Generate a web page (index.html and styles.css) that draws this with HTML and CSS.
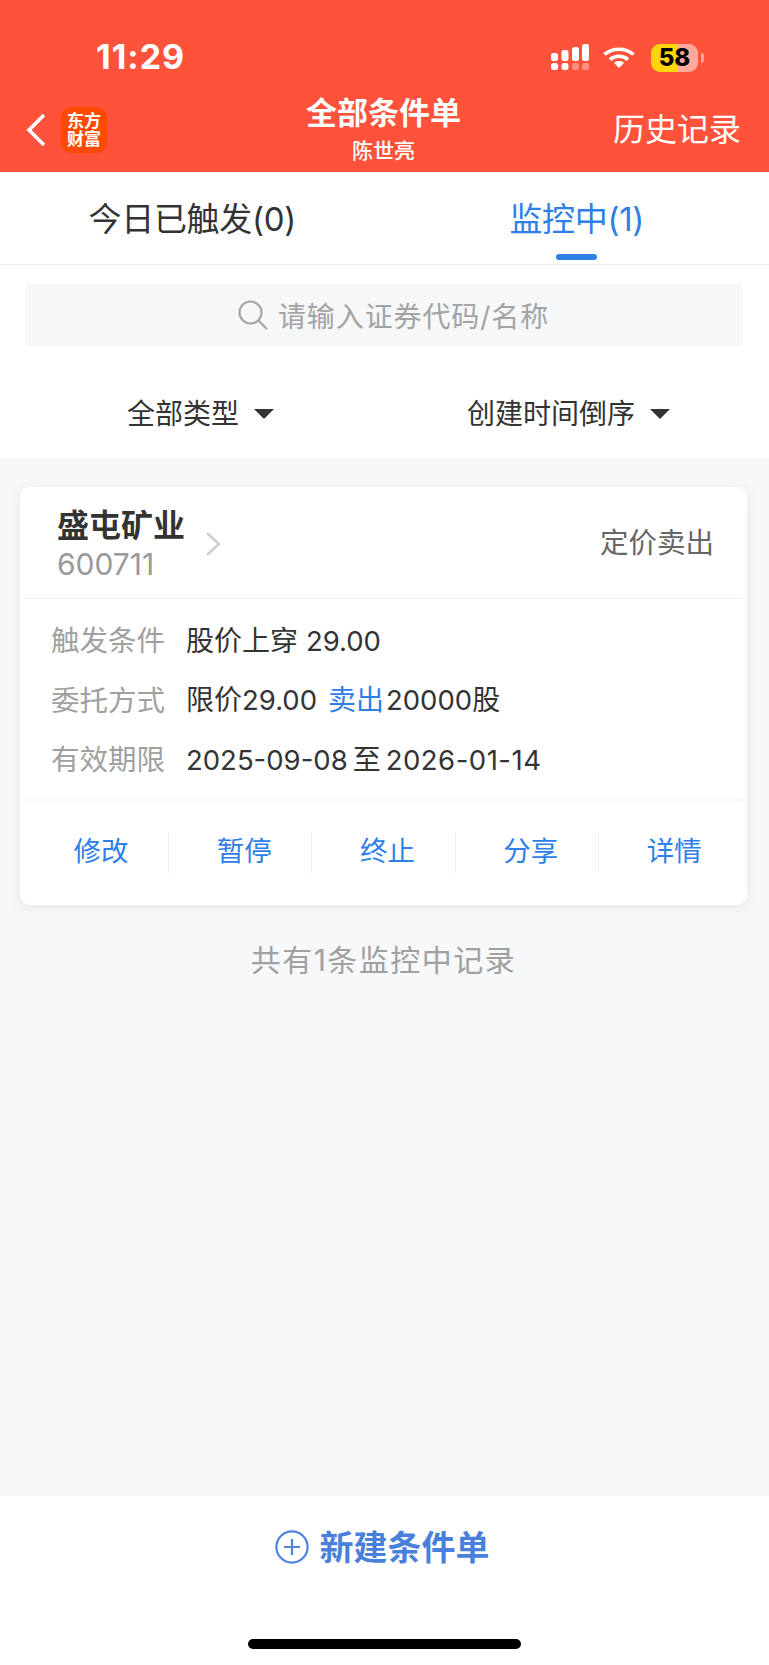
FILE: index.html
```html
<!DOCTYPE html>
<html lang="zh-CN">
<head>
<meta charset="utf-8">
<title>全部条件单</title>
<link rel="stylesheet" href="styles.css">
</head>
<body>
<div class="page">
  <header class="header">
    <div class="status">
      <span class="time">11:29</span>
      <div class="status-icons">
        <svg class="signal" width="38" height="26" viewBox="0 0 38 26" fill="#fff">
          <rect x="0" y="9" width="7" height="8" rx="2.5"/>
          <rect x="10.5" y="6" width="7" height="11" rx="2.5"/>
          <rect x="21" y="3" width="7" height="14" rx="2.5"/>
          <rect x="31" y="0" width="7" height="17" rx="2.5"/>
          <rect x="0" y="19" width="7" height="7" rx="2.5"/>
          <rect x="10.5" y="19" width="7" height="7" rx="2.5"/>
          <rect x="21" y="19" width="7" height="7" rx="2.5" fill-opacity=".35"/>
          <rect x="31" y="19" width="7" height="7" rx="2.5" fill-opacity=".35"/>
        </svg>
        <svg class="wifi" width="32" height="21" viewBox="0 0 32 21" fill="none" stroke="#fff" stroke-width="3.6">
          <path d="M1.5 7.5C9.5 .4 22.5 .4 30.5 7.5"/>
          <path d="M7 12.6c5-4.4 13-4.4 18 0"/>
          <path d="M16 21l-5.2-5.2c3-2.4 7.4-2.4 10.4 0z" fill="#fff" stroke="none"/>
        </svg>
        <div class="battery"><span class="battery-level">58</span><i class="battery-nub"></i></div>
      </div>
    </div>
    <div class="nav">
      <div class="nav-left">
        <svg class="back" width="20" height="34" viewBox="0 0 20 34" fill="none" stroke="#fff" stroke-width="3.6">
          <path d="M18 2L3 17l15 15"/>
        </svg>
        <div class="logo"><span>东方</span><span>财富</span></div>
      </div>
      <div class="nav-title">
        <div class="nav-main">全部条件单</div>
        <div class="nav-sub">陈世亮</div>
      </div>
      <div class="nav-right">历史记录</div>
    </div>
  </header>

  <section class="top">
    <div class="tabs">
      <div class="tab">今日已触发(0)</div>
      <div class="tab tab-active">监控中(1)</div>
    </div>
    <div class="search-wrap">
      <div class="search">
        <svg width="30" height="30" viewBox="0 0 30 30" fill="none" stroke="#a6a6a6" stroke-width="2.2">
          <circle cx="12.5" cy="12.5" r="11"/>
          <path d="M20.5 20.5L29 29"/>
        </svg>
        <span>请输入证券代码/名称</span>
      </div>
    </div>
    <div class="filters">
      <div class="filter filter-type">全部类型<i class="caret"></i></div>
      <div class="filter filter-sort">创建时间倒序<i class="caret"></i></div>
    </div>
  </section>

  <main class="list">
    <article class="card">
      <div class="card-head">
        <div class="stock">
          <div class="stock-name">盛屯矿业</div>
          <div class="stock-code">600711</div>
        </div>
        <svg class="stock-arrow" width="16" height="24" viewBox="0 0 16 24" fill="none" stroke="#ccc" stroke-width="2.4">
          <path d="M2 1l12 11L2 23"/>
        </svg>
        <div class="order-type">定价卖出</div>
      </div>
      <div class="card-body">
        <div class="row"><span class="label">触发条件</span><span class="value">股价上穿 <span class="num">29.00</span></span></div>
        <div class="row"><span class="label">委托方式</span><span class="value">限价<span class="num">29.00</span> <em class="sell">卖出</em><span class="num">20000</span>股</span></div>
        <div class="row"><span class="label">有效期限</span><span class="value"><span class="num">2025-09-08</span><span class="to">至</span><span class="num date-end">2026-01-14</span></span></div>
      </div>
      <div class="actions">
        <div class="action">修改</div>
        <div class="action">暂停</div>
        <div class="action">终止</div>
        <div class="action">分享</div>
        <div class="action">详情</div>
      </div>
    </article>
    <p class="summary">共有1条监控中记录</p>
  </main>

  <footer class="footer">
    <div class="create">
      <svg width="34" height="34" viewBox="0 0 34 34" fill="none" stroke="#4f84de" stroke-width="2.2">
        <circle cx="17" cy="17" r="15.6"/>
        <path d="M9 17h16M17 9v16"/>
      </svg>
      <span class="create-label">新建条件单</span>
    </div>
    <div class="home-bar"></div>
  </footer>
</div>
</body>
</html>
```

FILE: styles.css
```css
* { box-sizing: border-box; }
html, body { margin: 0; padding: 0; }
body {
  font-family: Inter, "Noto Sans CJK SC", sans-serif;
  color: #333;
  background: #f7f8fa;
}
.page {
  width: 769px;
  height: 1665px;
  display: flex;
  flex-direction: column;
  overflow: hidden;
  background: #f7f8fa;
}

/* header */
.header { height: 172px; background: #ff523b; color: #fff; flex: none; }
.status {
  height: 96px;
  padding: 40px 71px 0 96px;
  display: flex;
  justify-content: space-between;
  align-items: flex-start;
}
.time { font-size: 34px; line-height: 34px; font-weight: 700; letter-spacing: 1px; }
.status-icons { display: flex; align-items: flex-start; padding-top: 4px; }
.signal { display: block; margin-right: 14px; }
.wifi { display: block; margin: 3px 16px 0 0; }
.battery {
  position: relative;
  width: 47px;
  height: 28px;
  border-radius: 9px;
  background: linear-gradient(90deg, #ffd60a 0 27px, #ffa89c 27px 47px);
  color: #000;
  font-size: 24px;
  line-height: 28px;
  font-weight: 800;
  text-align: center;
}
.battery-nub {
  position: absolute;
  right: -6px;
  top: 9px;
  width: 3px;
  height: 10px;
  border-radius: 0 3px 3px 0;
  background: #ffa89c;
}
.nav {
  height: 76px;
  display: grid;
  grid-template-columns: 1fr auto 1fr;
  align-items: start;
  padding: 0 28px 0 26px;
}
.nav-left { display: flex; align-items: center; gap: 15px; margin-top: 11px; }
.back { display: block; }
.logo {
  width: 46px;
  height: 46px;
  border-radius: 11px;
  background: #ff4a00;
  display: flex;
  flex-direction: column;
  align-items: center;
  justify-content: center;
  font-size: 17px;
  line-height: 18px;
  font-weight: 700;
}
.nav-title { text-align: center; margin-top: -2px; }
.nav-main { font-size: 31px; line-height: 38px; font-weight: 600; margin-bottom: 6px; }
.nav-sub { font-size: 21px; line-height: 26px; font-weight: 500; }
.nav-right { justify-self: end; font-size: 32px; line-height: 40px; margin-top: 14px; }

/* tabs, search, filters */
.top { background: #fff; flex: none; height: 286px; }
.tabs { height: 93px; display: flex; border-bottom: 1px solid #efefef; }
.tab {
  position: relative;
  width: 50%;
  text-align: center;
  font-size: 33px;
  line-height: 40px;
  letter-spacing: -.3px;
  padding-top: 27px;
  color: #333;
}
.tab-active { color: #2e80e8; }
.tab-active::after {
  content: "";
  position: absolute;
  left: 171px;
  top: 82px;
  width: 41px;
  height: 6px;
  border-radius: 3px;
  background: #2e80e8;
}
.search-wrap { padding: 19px 26px 0 25px; }
.search {
  height: 62px;
  padding-left: 19px;
  border-radius: 5px;
  background: #f6f7f9;
  display: flex;
  align-items: center;
  justify-content: center;
  gap: 10px;
  font-size: 28px;
  color: #a3a3a3;
}
.search span { letter-spacing: .9px; }
.search svg { display: block; }
.filters { display: flex; padding-top: 50px; }
.filter {
  display: flex;
  align-items: center;
  gap: 15px;
  font-size: 28px;
  line-height: 36px;
  color: #333;
}
.filter-type { padding-left: 127px; width: 467px; }
.caret {
  width: 0;
  height: 0;
  border-left: 10px solid transparent;
  border-right: 10px solid transparent;
  border-top: 10px solid #333;
}

/* list */
.list { flex: 1; padding: 29px 22px 0 20px; }
.card {
  height: 418px;
  background: #fff;
  border-radius: 10px;
  box-shadow: 0 3px 14px rgba(40, 50, 70, .09);
}
.card-head {
  height: 112px;
  margin: 0 4px;
  padding: 20px 29px 0 33px;
  display: flex;
  align-items: flex-start;
  border-bottom: 1px solid #f2f2f2;
}
.stock-name { font-size: 32px; line-height: 38px; font-weight: 700; }
.stock-code { font-size: 30px; line-height: 36px; color: #999; margin-top: 1px; }
.stock-arrow { margin: 25px 0 0 20px; display: block; }
.order-type { margin-left: auto; font-size: 28.5px; line-height: 36px; color: #666; padding-top: 18px; }
.card-body { height: 200px; padding: 10px 0 0 31px; }
.row { height: 59.5px; display: flex; align-items: center; font-size: 28px; }
.label { width: 135px; flex: none; font-size: 28.5px; color: #a0a0a0; }
.value { font-size: 28px; color: #333; white-space: nowrap; }
.num { font-size: 27.5px; }
.date-end { letter-spacing: .5px; }
.to { margin: 0 5px; }
.sell { font-style: normal; color: #2e80e8; margin: 0 2px 0 3px; }
.actions {
  margin: 0 4px;
  padding: 31px 0 0 2px;
  display: flex;
  border-top: 2px solid #f7f7f7;
}
.action {
  width: 143.2px;
  height: 41px;
  padding-left: 8px;
  text-align: center;
  font-size: 27.5px;
  line-height: 39px;
  color: #2e80e8;
  border-right: 1px solid #f0f0f0;
}
.action:last-child { border-right: 0; }
.summary {
  margin: 35px 0 0;
  text-align: center;
  font-size: 30px;
  line-height: 40px;
  letter-spacing: 1.5px;
  color: #a0a0a0;
}

/* footer */
.footer {
  flex: none;
  height: 169px;
  background: #fff;
  display: flex;
  flex-direction: column;
  align-items: center;
}
.create {
  display: flex;
  align-items: center;
  gap: 11px;
  margin: 33px 0 0 -5px;
  height: 36px;
  font-size: 34px;
  font-weight: 600;
  color: #4a7fdc;
}
.create svg { display: block; }
.create-label { padding-bottom: 4px; }
.home-bar {
  width: 273px;
  height: 10px;
  margin-top: 74px;
  border-radius: 5px;
  background: #000;
}
```
